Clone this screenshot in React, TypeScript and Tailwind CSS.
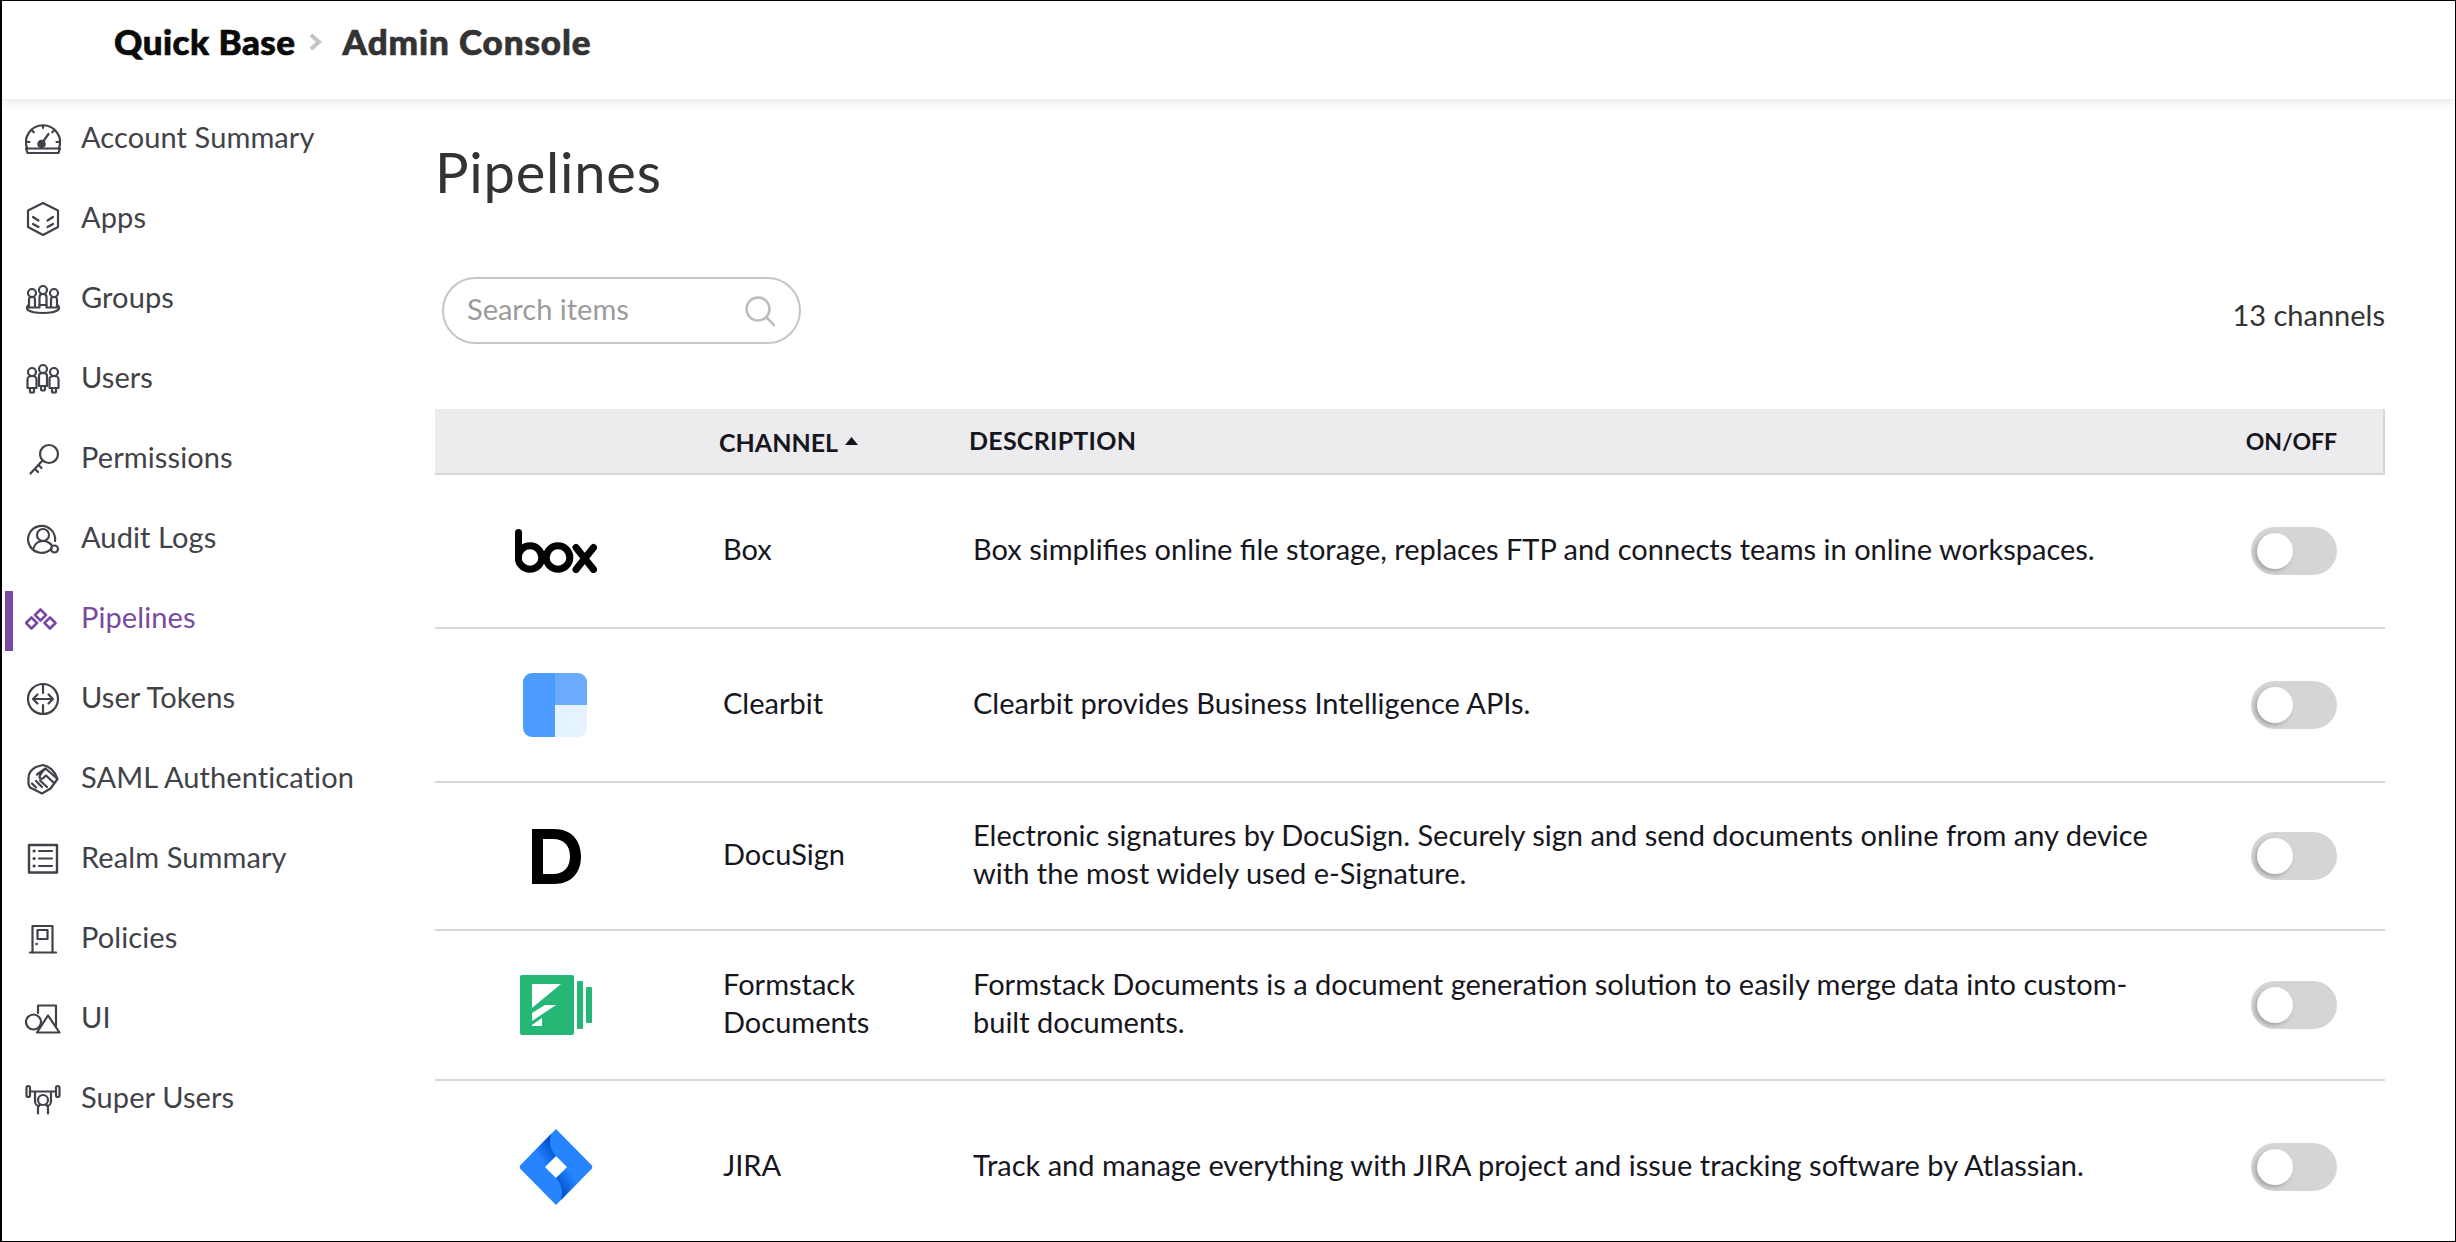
import type { ReactNode } from 'react';

const ink = '#3f4349';

const IconSvg = ({ children, color = ink, weight = '2.2' }: { children: ReactNode; color?: string; weight?: string }) => (
  <svg width="36" height="36" viewBox="0 0 36 36" fill="none" stroke={color} strokeWidth={weight} strokeLinecap="round" strokeLinejoin="round">
    {children}
  </svg>
);

const navItems: { label: string; active?: boolean; icon: ReactNode }[] = [
  {
    label: 'Account Summary',
    icon: (
      <IconSvg>
        <path d="M2.2 28.5A17 17 0 1 1 33.8 28.5" />
        <path d="M1 28.5H35L33.5 33H2.5Z" />
        <path d="M18 5.5V8M7 10.5L8.8 12.3M29 10.5L27.2 12.3M2 22H4.5M34 22H31.500" />
        <circle cx="16.500" cy="24" r="3.200" fill={ink} />
        <path d="M17 23L23.500 14" />
      </IconSvg>
    ),
  },
  {
    label: 'Apps',
    icon: (
      <IconSvg>
        <path d="M18 3L33 10.500V27L18 35L3 27V10.500Z" />
        <path d="M8 17L13.500 20.500M8 24L13.500 27M28 17L22.500 20.500M28 24L22.500 27" />
      </IconSvg>
    ),
  },
  {
    label: 'Groups',
    icon: (
      <IconSvg>
        <circle cx="7" cy="13" r="4" />
        <circle cx="18" cy="10" r="4" />
        <circle cx="29" cy="13" r="4" />
        <path d="M4 27V19.500C4 18 5 17 7 17S10 18 10 19.500V27M14.500 25V17C14.500 15 16 14 18 14S21.500 15 21.500 17V25M26 27V19.500C26 18 27 17 29 17S32 18 32 19.500V27" />
        <path d="M3 25.500C0.500 28 1 33 18 33S35.500 28 33 25.500M4 27.500H14.500V25H21.500V27.500H32" />
      </IconSvg>
    ),
  },
  {
    label: 'Users',
    icon: (
      <IconSvg>
        <circle cx="7" cy="12" r="4" />
        <circle cx="18" cy="9" r="4" />
        <circle cx="29" cy="12" r="4" />
        <path d="M2.500 28V19C2.500 17 5 16 7 16S11.500 17 11.500 19V28ZM5 28V31.500C5 33 9 33 9 31.500V28" />
        <path d="M14 26V16C14 14 16 13 18 13S22 14 22 16V26ZM16 26V29C16 31 20 31 20 29V26" />
        <path d="M24.500 28V19C24.500 17 27 16 29 16S33.500 17 33.500 19V28ZM27 28V31.500C27 33 31 33 31 31.500V28" />
      </IconSvg>
    ),
  },
  {
    label: 'Permissions',
    icon: (
      <IconSvg>
        <circle cx="24" cy="14" r="9" />
        <path d="M17.500 20.500L5.500 33.500M10 29L13 32M13.500 25L16.500 28" />
      </IconSvg>
    ),
  },
  {
    label: 'Audit Logs',
    icon: (
      <IconSvg>
        <path d="M26.500 28.500A13.500 13.500 0 1 1 30 21" />
        <circle cx="18" cy="15" r="6" />
        <path d="M8.500 28C10 23.500 14 21 18 21S26 23.500 27 26" />
        <circle cx="29.500" cy="29" r="3.500" />
      </IconSvg>
    ),
  },
  {
    label: 'Pipelines',
    active: true,
    icon: (
      <IconSvg color="#7a4a9e" weight="2.6">
        <path d="M6.500 17.500L12 23L6.500 28.500L1 23Z" />
        <path d="M15.500 9.500L21 15L15.500 20.500L10 15Z" />
        <path d="M25 17.500L30.500 23L25 28.500L19.500 23Z" />
      </IconSvg>
    ),
  },
  {
    label: 'User Tokens',
    icon: (
      <IconSvg>
        <circle cx="18" cy="19" r="15" />
        <path d="M18 4V13M18 25V34M8 19H28M12.500 14.500L8 19L12.500 23.500M23.500 14.500L28 19L23.500 23.500" />
      </IconSvg>
    ),
  },
  {
    label: 'SAML Authentication',
    icon: (
      <IconSvg>
        <path d="M3.500 18C3.500 13 7 9 11 7L18 5C24 6 30 11 32.500 19L25.500 28.500L17 33.500L5 27.500L3.500 24Z" />
        <path d="M12 14.500L20.500 8.500L32 18.500M20.500 8.500C16 13 13 17 15.500 18.500C18 20 20 16 21 15.500L29 23" />
        <path d="M7 23.500L11 27.500M11 21L17 27M15 20.500L22 27" />
      </IconSvg>
    ),
  },
  {
    label: 'Realm Summary',
    icon: (
      <IconSvg>
        <path d="M4 5H32V32.500H4Z" strokeWidth="2.400" />
        <path d="M14 11H27M14 18.500H27M14 26H27" />
        <path d="M9 11H9.200M9 18.500H9.200M9 26H9.200" strokeWidth="3" />
      </IconSvg>
    ),
  },
  {
    label: 'Policies',
    icon: (
      <IconSvg>
        <path d="M7.500 32.500V6H27.500V32.500" />
        <path d="M12.500 10H22.500V19H12.500Z" />
        <path d="M5 32.500H31" />
        <path d="M11.500 24H11.700" strokeWidth="2.500" />
      </IconSvg>
    ),
  },
  {
    label: 'UI',
    icon: (
      <IconSvg>
        <path d="M13 13V5.500H31V26" />
        <circle cx="8.500" cy="22" r="7.500" />
        <path d="M23 15.500L34.500 32.500H12Z" />
      </IconSvg>
    ),
  },
  {
    label: 'Super Users',
    icon: (
      <IconSvg>
        <rect x="1.500" y="6" width="3.500" height="11" rx="1.700" />
        <rect x="31" y="6" width="3.500" height="11" rx="1.700" />
        <path d="M5 11.500H31M10 11.500V21C10 24 12 26 14 26M26 11.500V21C26 24 24 26 22 26" />
        <circle cx="18" cy="20" r="5" />
        <path d="M13 33.500V27.500C13 26 14 25 15 25M23 33.500V27.500C23 26 22 25 21 25" />
      </IconSvg>
    ),
  },
];

const BoxLogo = () => (
  <svg width="82" height="44" viewBox="0 0 82 44" fill="none" stroke="#000" strokeWidth="7" strokeLinecap="round">
    <path d="M3.500 3.500V28" />
    <circle cx="15" cy="28.500" r="11.800" />
    <circle cx="43" cy="28.500" r="11.800" />
    <path d="M61 18.500L78.500 40.500M78.500 18.500L61 40.500" />
  </svg>
);

const ClearbitLogo = () => (
  <div className="mr-[2px] flex h-[64px] w-[64px] overflow-hidden rounded-[9px]">
    <div className="w-[32px] bg-[#4c9cff]" />
    <div className="flex w-[32px] flex-col">
      <div className="h-[32px] bg-[#6aabff]" />
      <div className="h-[32px] bg-[#e5f2ff]" />
    </div>
  </div>
);

const DocuSignLogo = () => (
  <svg width="49" height="55" viewBox="0 0 49 55">
    <path
      fillRule="evenodd"
      d="M0 0H22C39 0 49 11 49 27.500C49 44 39 55 22 55H0ZM11 10V45H21C32 45 38 38 38 27.500C38 17 32 10 21 10Z"
      fill="#000"
    />
  </svg>
);

const FormstackLogo = () => (
  <svg width="72" height="60" viewBox="0 0 72 60">
    <rect width="54" height="60" rx="2" fill="#25b776" />
    <rect x="57" y="6" width="6" height="48" rx="1" fill="#25b776" />
    <rect x="66" y="12" width="6" height="36" rx="1" fill="#25b776" />
    <path d="M12 9H41L12 33Z" fill="#fff" />
    <path d="M25 30H36L12 46V38Z" fill="#fff" />
    <path d="M22 43V51H12V50Z" fill="#fff" />
  </svg>
);

const JiraLogo = () => (
  <svg width="74" height="76" viewBox="0 0 74 76">
    <defs>
      <linearGradient id="jira-a" x1="34" y1="17" x2="19" y2="27" gradientUnits="userSpaceOnUse">
        <stop offset="0" stopColor="#0052cc" />
        <stop offset="1" stopColor="#2684ff" />
      </linearGradient>
      <linearGradient id="jira-b" x1="40" y1="59" x2="55" y2="49" gradientUnits="userSpaceOnUse">
        <stop offset="0" stopColor="#0052cc" />
        <stop offset="1" stopColor="#2684ff" />
      </linearGradient>
    </defs>
    <path
      fillRule="evenodd"
      d="M37 0L72.500 36C73.500 37 73.500 39 72.500 40L37 76L1.500 40C0.500 39 0.500 37 1.500 36ZM37 27L26 38L37 49L48 38Z"
      fill="#2684ff"
    />
    <path d="M37 27C31 21 29.500 11 32.500 4.500L12 25.500L24.500 38Z" fill="url(#jira-a)" />
    <path d="M37 49C43 55 44.500 65 41.500 71.500L62 50.500L49.500 38Z" fill="url(#jira-b)" />
  </svg>
);

const channels = [
  { name: ['Box'], desc: ['Box simplifies online file storage, replaces FTP and connects teams in online workspaces.'], logo: <BoxLogo />, rowClass: 'h-[154px] border-b-2' },
  { name: ['Clearbit'], desc: ['Clearbit provides Business Intelligence APIs.'], logo: <ClearbitLogo />, rowClass: 'h-[154px] border-b-2' },
  {
    name: ['DocuSign'],
    desc: ['Electronic signatures by DocuSign. Securely sign and send documents online from any device', 'with the most widely used e-Signature.'],
    logo: <DocuSignLogo />,
    rowClass: 'h-[148px] border-b-2',
  },
  {
    name: ['Formstack', 'Documents'],
    desc: ['Formstack Documents is a document generation solution to easily merge data into custom-', 'built documents.'],
    logo: <FormstackLogo />,
    rowClass: 'h-[150px] border-b-2',
  },
  { name: ['JIRA'], desc: ['Track and manage everything with JIRA project and issue tracking software by Atlassian.'], logo: <JiraLogo />, rowClass: 'h-[172px]' },
];

const Toggle = () => (
  <div className="flex h-[48px] w-[86px] items-center rounded-full bg-[#d5d5d7] px-[6px]">
    <div className="h-[36px] w-[36px] rounded-full bg-white shadow-[-2px_2px_4px_rgba(0,0,0,0.25)]" />
  </div>
);

export default function App() {
  return (
    <div className="box-border flex h-[1242px] w-[2456px] flex-col overflow-hidden border border-l-2 border-black bg-white font-['Lato',sans-serif]">
      <header className="relative z-10 flex h-[98px] shrink-0 items-center bg-white pb-[17px] pl-[112px] text-[35px] font-black [-webkit-text-stroke:0.7px] shadow-[0_2px_10px_rgba(0,0,0,0.12)]">
        <span className="tracking-[0.5px] text-[#0a0a0a]">Quick Base</span>
        <svg className="ml-[13px]" width="14" height="16" viewBox="0 0 14 16" fill="none" stroke="#c4c4c4" strokeWidth="4">
          <path d="M2 1L10 8L2 15" />
        </svg>
        <span className="ml-[20px] tracking-[0.9px] text-[#333]">Admin Console</span>
      </header>

      <div className="flex min-h-0 flex-1">
        <nav className="-mt-[2px] flex w-[433px] shrink-0 flex-col">
          {navItems.map((item) => (
            <div key={item.label} className={`flex h-[80px] shrink-0 items-center pl-[3px] text-[29px] tracking-[0.1px] ${item.active ? 'text-[#7a4a9e]' : 'text-[#3f4349]'}`}>
              <div className={`mt-[8px] h-[60px] w-[8px] ${item.active ? 'bg-[#7a4a9e]' : ''}`} />
              <div className="mt-[2px] ml-[12px] flex h-[36px] w-[36px] items-center justify-center">{item.icon}</div>
              <span className="ml-[20px]">{item.label}</span>
            </div>
          ))}
        </nav>

        <main className="w-[1950px] shrink-0">
          <h1 className="mt-[41px] h-[66px] text-[56px] leading-[64px] font-normal tracking-[0.8px] text-[#333]">Pipelines</h1>

          <div className="mt-[71px] flex items-start justify-between">
            <div className="ml-[7px] flex h-[67px] w-[359px] items-center justify-between rounded-full border-2 border-[#c6c6c8] pr-[23px] pl-[23px]">
              <span className="-mt-[3px] text-[29px] text-[#9b9b9b]">Search items</span>
              <svg width="32" height="32" viewBox="0 0 32 32" fill="none" stroke="#bdbdc0" strokeWidth="2.500" strokeLinecap="round">
                <circle cx="14" cy="14" r="11.500" />
                <path d="M23 23L30 30" />
              </svg>
            </div>
            <span className="pt-[16px] text-[29px] text-[#333]">13 channels</span>
          </div>

          <div className="mt-[65px] grid h-[66px] grid-cols-[284px_250px_1fr_auto] items-center border-r-2 border-b-2 border-[#d6d6d8] bg-[#ececee] text-[25px] font-bold text-[#16161e]">
            <div />
            <div className="flex items-center gap-[7px] pt-[3px]">
              CHANNEL
              <svg className="mb-[4px]" width="13" height="8" viewBox="0 0 13 8">
                <path d="M6.500 0L13 8H0Z" fill="#16161e" />
              </svg>
            </div>
            <div className="tracking-[0.25px]">DESCRIPTION</div>
            <div className="pr-[46px] text-[23px]">ON/OFF</div>
          </div>

          {channels.map((row) => (
            <div key={row.name[0]} className={`grid grid-cols-[284px_250px_1fr_auto] items-center border-[#d8d8d8] text-[29px] leading-[38px] text-[#16161e] ${row.rowClass}`}>
              <div className="flex w-[242px] justify-center">{row.logo}</div>
              <div className="-mt-[4px] pl-[4px]">
                {row.name.map((line) => (
                  <div key={line}>{line}</div>
                ))}
              </div>
              <div className="-mt-[4px] pl-[4px]">
                {row.desc.map((line) => (
                  <div key={line} className="whitespace-nowrap">{line}</div>
                ))}
              </div>
              <div className="pr-[48px]">
                <Toggle />
              </div>
            </div>
          ))}
        </main>
      </div>
    </div>
  );
}
